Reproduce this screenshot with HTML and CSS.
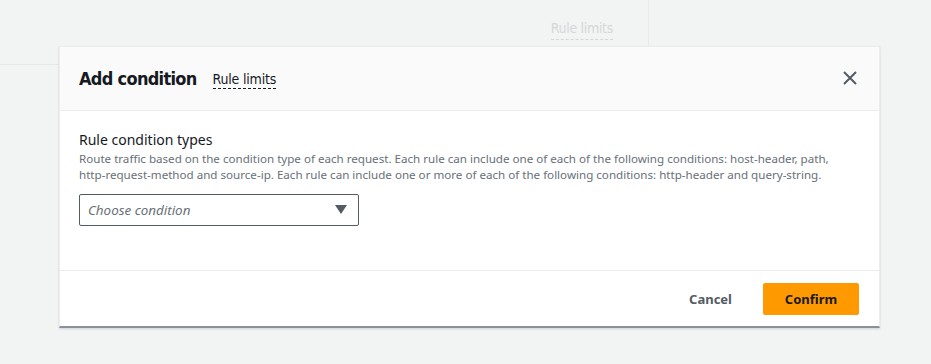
FILE: index.html
```html
<!DOCTYPE html>
<html lang="en">
<head>
  <meta charset="UTF-8" />
  <title>Add condition</title>
  <link rel="stylesheet" href="styles.css">
</head>
<body>

  <!-- page behind the dialog -->
  <div class="backdrop-panel">
    <span class="ghost-link">Rule limits</span>
  </div>

  <!-- DIALOG -->
  <div class="modal" role="dialog" aria-labelledby="modal-title">
    <div class="modal-header">
      <h2 id="modal-title">Add condition</h2>
      <a href="#" class="info-link">Rule limits</a>
      <button class="close-btn" aria-label="Close">
        <svg width="16" height="16" viewBox="0 0 16 16" aria-hidden="true">
          <path d="M2 2 L14 14 M14 2 L2 14" stroke="#545b64" stroke-width="2" fill="none" />
        </svg>
      </button>
    </div>

    <div class="modal-body">
      <label class="field-label" for="condition">Rule condition types</label>
      <p class="field-desc">Route traffic based on the condition type of each request. Each rule can include one of each of the following conditions: host-header, path, <span class="nowrap">http-request-method</span> and source-ip. Each rule can include one or more of each of the following conditions: http-header and query-string.</p>
      <div class="select" id="condition">
        <span class="placeholder">Choose condition</span>
        <svg class="caret" width="12" height="10" viewBox="0 0 12 10" aria-hidden="true">
          <path d="M0 0 H12 L6 9 Z" fill="#545b64" />
        </svg>
      </div>
    </div>

    <div class="modal-footer">
      <button class="btn btn-link">Cancel</button>
      <button class="btn btn-primary">Confirm</button>
    </div>
  </div>

</body>
</html>
```

FILE: styles.css
```css
/* Reset & basics */
*, *::before, *::after {
  box-sizing: border-box;
}
body, h2, p {
  margin: 0;
  padding: 0;
}
body {
  font-family: 'Noto Sans', 'Open Sans', sans-serif;
  background: #f2f3f3;
  color: #16191f;
  width: 931px;
  height: 364px;
  overflow: hidden;
  position: relative;
}

/* page behind */
.backdrop-panel {
  width: 649px;
  height: 65px;
  border-bottom: 1px solid #e6e8e8;
  border-right: 1px solid #e9ebeb;
  display: flex;
  justify-content: flex-end;
  padding: 20px 35px 0 0;
}
.ghost-link {
  font-family: 'DejaVu Sans Condensed', 'Liberation Sans Narrow', sans-serif;
  font-size: 14px;
  color: #d5d8d9;
  border-bottom: 1px dashed #d5d8d9;
  height: 20px;
  letter-spacing: -0.3px;
}

/* DIALOG */
.modal {
  position: absolute;
  top: 46px;
  left: 59px;
  width: 821px;
  background: #fff;
  border: 1px solid #eaeded;
  border-bottom: 2px solid #879196;
  box-shadow: 0 1px 2px rgba(0, 22, 40, 0.15);
}
.modal-header {
  height: 64px;
  background: #fafafa;
  border-bottom: 1px solid #eaeded;
  display: flex;
  align-items: center;
  padding: 0 20px 0 19px;
}
.modal-header h2 {
  font-family: 'DejaVu Sans Condensed', 'Liberation Sans Narrow', sans-serif;
  font-size: 18px;
  font-weight: 700;
  letter-spacing: -0.7px;
  margin-right: 16px;
  margin-top: -1px;
}
.info-link {
  font-family: 'DejaVu Sans Condensed', 'Liberation Sans Narrow', sans-serif;
  font-size: 14px;
  color: #16191f;
  text-decoration: none;
  border-bottom: 1px dashed #16191f;
  letter-spacing: -0.2px;
  line-height: 17px;
  margin-top: 3px;
}
.close-btn {
  margin-left: auto;
  background: none;
  border: none;
  padding: 0;
  width: 16px;
  height: 16px;
  cursor: pointer;
  margin-right: 1px;
  margin-top: -2px;
}
.close-btn svg {
  display: block;
}

.modal-body {
  padding: 18px 19px 44px 19px;
}
.field-label {
  display: block;
  font-size: 14px;
  line-height: 22px;
  color: #16191f;
}
.field-desc {
  font-size: 11.6px;
  line-height: 16px;
  color: #687078;
  margin-bottom: 11px;
}
.nowrap {
  white-space: nowrap;
}
.select {
  width: 280px;
  height: 32px;
  border: 1px solid #545b64;
  border-radius: 2px;
  display: flex;
  align-items: center;
  justify-content: space-between;
  padding: 0 10px 0 8px;
}
.placeholder {
  font-size: 13.4px;
  font-style: italic;
  color: #687078;
}
.caret {
  margin-right: 1px;
}

.modal-footer {
  border-top: 1px solid #eaeded;
  display: flex;
  justify-content: flex-end;
  align-items: center;
  gap: 10px;
  padding: 12px 20px 11px;
}
.btn {
  font-family: 'Noto Sans', 'Open Sans', sans-serif;
  font-size: 13px;
  font-weight: 700;
  height: 32px;
  border-radius: 2px;
  cursor: pointer;
  border: 1px solid transparent;
}
.btn-link {
  background: none;
  color: #545b64;
  padding: 0 20px;
}
.btn-primary {
  background: #ff9900;
  border-color: #ff9900;
  color: #16191f;
  width: 96px;
}
```
